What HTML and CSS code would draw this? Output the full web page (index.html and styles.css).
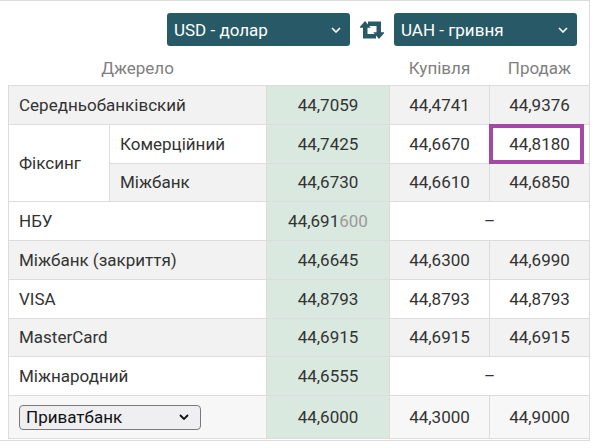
FILE: index.html
```html
<!DOCTYPE html>
<html lang="uk">
<head>
<meta charset="utf-8">
<title>Курси валют</title>
<link rel="stylesheet" href="styles.css">
</head>
<body>
<div class="frame">
  <div class="toolbar">
    <div class="cur-select">
      <span>USD - долар</span>
      <svg class="chev" viewBox="0 0 10 6" width="10" height="6"><path d="M1 1l4 4 4-4" fill="none" stroke="#fff" stroke-width="1.6"/></svg>
    </div>
    <svg class="swap" viewBox="0 0 24 18" width="24" height="18">
      <path fill="#275a66" d="M5 0L10.8 6.8H7.5V13H16V17.5H3V6.8H-0.8Z"/>
      <path fill="#275a66" d="M19 18L13.2 11.2H16.5V5H8V0.5H21V11.2H24.8Z"/>
    </svg>
    <div class="cur-select">
      <span>UAH - гривня</span>
      <svg class="chev" viewBox="0 0 10 6" width="10" height="6"><path d="M1 1l4 4 4-4" fill="none" stroke="#fff" stroke-width="1.6"/></svg>
    </div>
  </div>
  <table class="rates">
    <colgroup>
      <col class="c1"><col class="c2"><col class="c3"><col class="c4"><col class="c5">
    </colgroup>
    <thead>
      <tr>
        <th colspan="2">Джерело</th>
        <th></th>
        <th>Купівля</th>
        <th>Продаж</th>
      </tr>
    </thead>
    <tbody>
      <tr class="odd">
        <td colspan="2" class="name">Середньобанківский</td>
        <td class="mid">44,7059</td>
        <td class="num">44,4741</td>
        <td class="num">44,9376</td>
      </tr>
      <tr class="even">
        <td rowspan="2" class="name fix">Фіксинг</td>
        <td class="name">Комерційний</td>
        <td class="mid">44,7425</td>
        <td class="num">44,6670</td>
        <td class="num marked">44,8180</td>
      </tr>
      <tr class="odd">
        <td class="name">Міжбанк</td>
        <td class="mid">44,6730</td>
        <td class="num">44,6610</td>
        <td class="num">44,6850</td>
      </tr>
      <tr class="even">
        <td colspan="2" class="name">НБУ</td>
        <td class="mid">44,691<span class="extra">600</span></td>
        <td colspan="2" class="num">–</td>
      </tr>
      <tr class="odd">
        <td colspan="2" class="name">Міжбанк (закриття)</td>
        <td class="mid">44,6645</td>
        <td class="num">44,6300</td>
        <td class="num">44,6990</td>
      </tr>
      <tr class="even">
        <td colspan="2" class="name">VISA</td>
        <td class="mid">44,8793</td>
        <td class="num">44,8793</td>
        <td class="num">44,8793</td>
      </tr>
      <tr class="odd">
        <td colspan="2" class="name">MasterCard</td>
        <td class="mid">44,6915</td>
        <td class="num">44,6915</td>
        <td class="num">44,6915</td>
      </tr>
      <tr class="even">
        <td colspan="2" class="name">Міжнародний</td>
        <td class="mid">44,6555</td>
        <td colspan="2" class="num">–</td>
      </tr>
      <tr class="last">
        <td colspan="2" class="name">
          <div class="bank-select">
            <span>Приватбанк</span>
            <svg class="chev" viewBox="0 0 10 6" width="10" height="6"><path d="M1 1l4 4 4-4" fill="none" stroke="#111" stroke-width="1.8"/></svg>
          </div>
        </td>
        <td class="mid">44,6000</td>
        <td class="num">44,3000</td>
        <td class="num">44,9000</td>
      </tr>
    </tbody>
  </table>
</div>
</body>
</html>
```

FILE: styles.css
```css
html, body {
  margin: 0;
  padding: 0;
  background: #fff;
}

body {
  font-family: Roboto, "Noto Sans", sans-serif;
  font-size: 17px;
  color: #333;
}

.frame {
  width: 581px;
  height: 439px;
  padding-left: 8px;
  border: 1px solid #dcdcdc;
  border-left: none;
  overflow: hidden;
}

.toolbar {
  display: flex;
  align-items: center;
  justify-content: flex-end;
  gap: 9px;
  padding-top: 12px;
  padding-right: 12px;
  height: 33px;
}

.cur-select {
  box-sizing: border-box;
  width: 183px;
  height: 33px;
  background: #275a66;
  border-radius: 3px;
  color: #fff;
  display: flex;
  align-items: center;
  justify-content: space-between;
  padding: 0 9px 0 7px;
  font-size: 17px;
}

.swap {
  display: block;
  margin: 0 1px;
}

.rates {
  table-layout: fixed;
  border-collapse: collapse;
  width: 581px;
}

.c1 { width: 101px; }
.c2 { width: 157px; }
.c3 { width: 123px; }
.c4 { width: 100px; }
.c5 { width: 100px; }

.rates th {
  height: 32px;
  padding: 0 0 7px;
  vertical-align: bottom;
  font-weight: normal;
  color: #808080;
  line-height: 20px;
  text-align: center;
}

.rates td {
  border: 1px solid #dcdcdc;
  height: 37.75px;
  padding: 0 10px;
  line-height: 20px;
  vertical-align: middle;
}

.rates tr.odd td { background: #f2f2f2; }
.rates tr.even td { background: #fff; }
.rates tr.last td { background: #f7f7f7; height: 42px; }

.rates td.fix { background: #fff; }

.rates td.mid {
  background: #d9e9df !important;
  text-align: center;
}

.rates td.num {
  text-align: center;
}

.extra {
  color: #999;
}

.marked {
  position: relative;
}

.marked::after {
  content: "";
  position: absolute;
  left: -1px;
  top: -1px;
  bottom: -1px;
  width: 95px;
  box-sizing: border-box;
  border: 4px solid #a349a4;
}

.bank-select {
  box-sizing: border-box;
  width: 182px;
  height: 25px;
  border: 1px solid #7a7a7a;
  border-radius: 4px;
  background: #efeff1;
  color: #111;
  display: flex;
  align-items: center;
  justify-content: space-between;
  padding: 0 11px 0 6px;
  font-size: 17px;
}
```
